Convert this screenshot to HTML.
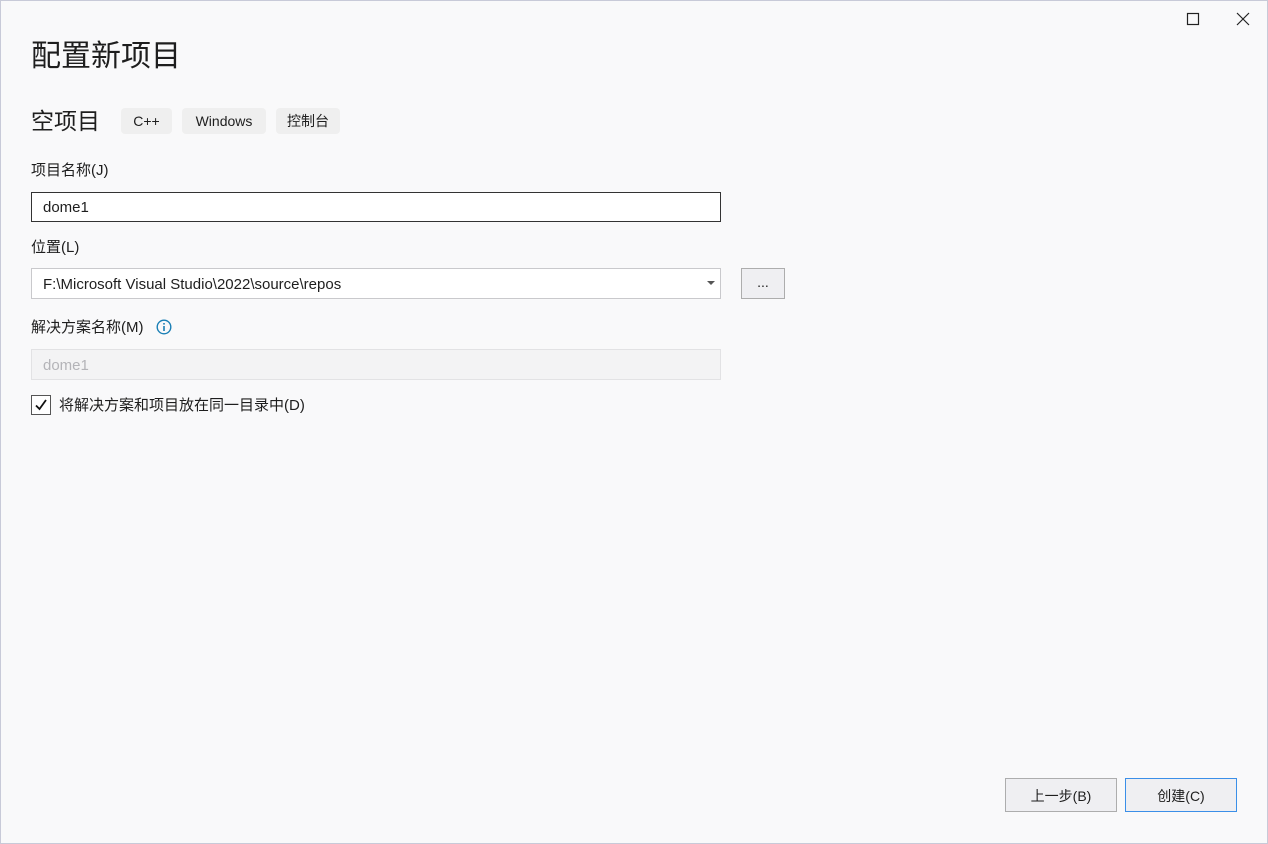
<!DOCTYPE html>
<html><head><meta charset="utf-8"><style>
body{margin:0;width:1268px;height:844px;background:#f9f9fa;font-family:"Liberation Sans","Noto Sans CJK SC",sans-serif;color:#1e1e1e;position:relative;overflow:hidden}
.frame{position:absolute;left:0;top:0;width:1266px;height:842px;border:1px solid #c8cad8}
.a{position:absolute;white-space:nowrap}
.tag{position:absolute;top:108px;height:26px;background:#efefef;border-radius:4px;font-size:14px;line-height:26px;text-align:center}
.inp{position:absolute;left:31px;width:688px;height:29px;border:1px solid #c9c9cc;background:#fff;font-size:15px;line-height:31px;box-sizing:content-box}
.btn{position:absolute;top:778px;height:34px;background:#efeff2;font-size:14px;line-height:34px;text-align:center;box-sizing:border-box}
.lbl{font-size:15px;line-height:20px}
</style></head><body>
<div class="frame"></div>
<svg class="a" style="left:1186px;top:12px" width="14" height="14"><rect x="1.5" y="1.5" width="11" height="11" fill="none" stroke="#222" stroke-width="1.2"/></svg>
<svg class="a" style="left:1236px;top:12px" width="14" height="14"><path d="M1 1L13 13M13 1L1 13" stroke="#222" stroke-width="1.2"/></svg>
<div class="a" style="left:31px;top:37px;font-size:30px;line-height:40px">配置新项目</div>
<div class="a" style="left:31px;top:105px;font-size:23px;line-height:32px">空项目</div>
<div class="tag" style="left:121px;width:51px">C++</div>
<div class="tag" style="left:182px;width:84px">Windows</div>
<div class="tag" style="left:276px;width:64px">控制台</div>
<div class="a lbl" style="left:31px;top:161px">项目名称(J)</div>
<div class="inp" style="top:192px;border-color:#333;height:28px;line-height:30px;padding-left:11px;width:677px">dome1</div>
<div class="a lbl" style="left:31px;top:238px">位置(L)</div>
<div class="inp" style="top:268px;padding-left:11px;width:677px">F:\Microsoft Visual Studio\2022\source\repos</div>
<svg class="a" style="left:707px;top:281px" width="8" height="5"><path d="M0 0H8L4 4Z" fill="#555"/></svg>
<div class="a" style="left:741px;top:268px;width:42px;height:29px;border:1px solid #adadad;background:#efeff2;text-align:center;font-size:14px;line-height:26px">...</div>
<div class="a lbl" style="left:31px;top:318px">解决方案名称(M)</div>
<svg class="a" style="left:156px;top:319px" width="16" height="16"><circle cx="8" cy="8" r="6.8" fill="none" stroke="#1a7fb5" stroke-width="1.4"/><rect x="7.2" y="7" width="1.6" height="5" fill="#1a7fb5"/><rect x="7.2" y="4" width="1.6" height="1.6" fill="#1a7fb5"/></svg>
<div class="inp" style="top:349px;padding-left:11px;width:677px;background:#f3f3f4;border-color:#e2e2e4;color:#b4b4b8">dome1</div>
<div class="a" style="left:31px;top:395px;width:18px;height:18px;border:1px solid #555;background:#fff"></div>
<svg class="a" style="left:34px;top:398px" width="14" height="14"><path d="M2 7.5L5.5 11L12 2" fill="none" stroke="#111" stroke-width="1.8"/></svg>
<div class="a" style="left:59px;top:396px;font-size:15px;line-height:20px">将解决方案和项目放在同一目录中(D)</div>
<div class="btn" style="left:1005px;width:112px;border:1px solid #adadad">上一步(B)</div>
<div class="btn" style="left:1125px;width:112px;border:1px solid #3b8fe8">创建(C)</div>
</body></html>
